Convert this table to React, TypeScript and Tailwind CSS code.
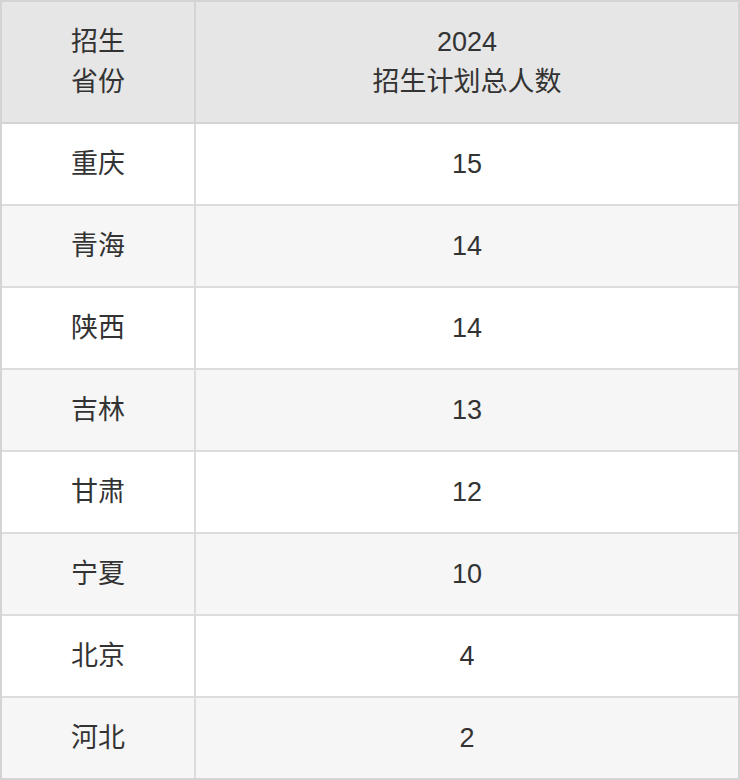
const rows = [
  { province: "重庆", count: 15 },
  { province: "青海", count: 14 },
  { province: "陕西", count: 14 },
  { province: "吉林", count: 13 },
  { province: "甘肃", count: 12 },
  { province: "宁夏", count: 10 },
  { province: "北京", count: 4 },
  { province: "河北", count: 2 },
];

export default function App() {
  return (
    <div className="w-[740px] h-[780px] bg-white font-['Liberation_Sans','Noto_Sans_CJK_SC',sans-serif] text-[27px] text-[#333333]">
      <div className="border-2 border-[#d4d4d4]">
        {/* header */}
        <div className="flex h-[122px] bg-[#e6e6e6] border-b-2 border-[#d4d4d4] leading-[40px]">
          <div className="w-[194px] shrink-0 border-r-2 border-[#d4d4d4] flex items-center justify-center text-center">
            招生
            <br />
            省份
          </div>
          <div className="flex-1 flex items-center justify-center text-center">
            2024
            <br />
            招生计划总人数
          </div>
        </div>

        {rows.map((row, i) => (
          <div
            key={row.province}
            className={`flex ${i % 2 === 1 ? "bg-[#f6f6f6]" : "bg-white"} ${i < rows.length - 1 ? "h-[82px] border-b-2 border-[#dcdcdc]" : "h-[80px]"}`}
          >
            <div className="w-[194px] shrink-0 border-r-2 border-[#dcdcdc] flex items-center justify-center">
              {row.province}
            </div>
            <div className="flex-1 flex items-center justify-center">{row.count}</div>
          </div>
        ))}
      </div>
    </div>
  );
}
